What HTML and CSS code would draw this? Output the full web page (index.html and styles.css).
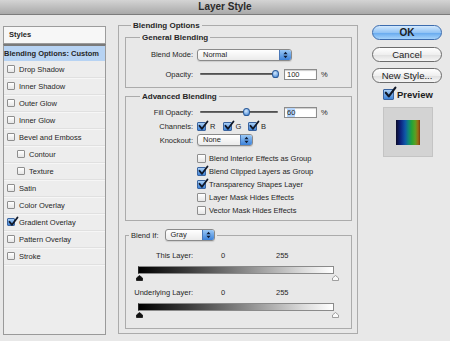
FILE: index.html
```html
<!DOCTYPE html>
<html>
<head>
<meta charset="utf-8">
<title>Layer Style</title>
<link rel="stylesheet" href="styles.css">
</head>
<body>
<div class="titlebar">Layer Style</div>
<div class="main">
  <div class="left">
    <div class="styles-head">Styles</div>
    <div class="styles-list">
      <div class="item active">Blending Options: Custom</div>
      <div class="item"><span class="cb"></span>Drop Shadow</div>
      <div class="item"><span class="cb"></span>Inner Shadow</div>
      <div class="item"><span class="cb"></span>Outer Glow</div>
      <div class="item"><span class="cb"></span>Inner Glow</div>
      <div class="item"><span class="cb"></span>Bevel and Emboss</div>
      <div class="item sub"><span class="cb"></span>Contour</div>
      <div class="item sub"><span class="cb"></span>Texture</div>
      <div class="item"><span class="cb"></span>Satin</div>
      <div class="item"><span class="cb"></span>Color Overlay</div>
      <div class="item"><span class="cb on"><svg class="chk" viewBox="0 0 10 10"><path d="M1.5 4.8 L4 7.8 L9.5 0.5"/></svg></span>Gradient Overlay</div>
      <div class="item"><span class="cb"></span>Pattern Overlay</div>
      <div class="item"><span class="cb"></span>Stroke</div>
    </div>
  </div>

  <div class="center">
    <div class="group outer">
      <div class="gtitle t-outer"><span>Blending Options</span></div>

      <div class="group general">
        <div class="gtitle t-inner"><span>General Blending</span></div>
        <div class="row r-mode">
          <span class="lab">Blend Mode:</span>
          <div class="select w-mode"><span class="sval">Normal</span><i class="arr"><svg viewBox="0 0 6 9"><path d="M3 0.5 L5.5 3.5 L0.5 3.5 Z M3 8.5 L5.5 5.5 L0.5 5.5 Z"/></svg></i></div>
        </div>
        <div class="row r-opac">
          <span class="lab">Opacity:</span>
          <div class="slider"><div class="track"></div><span class="thumb" style="left:98%"></span></div>
          <div class="num">100</div><span class="pct">%</span>
        </div>
      </div>

      <div class="group advanced">
        <div class="gtitle t-inner"><span>Advanced Blending</span></div>
        <div class="row r-fill">
          <span class="lab">Fill Opacity:</span>
          <div class="slider"><div class="track"></div><span class="thumb" style="left:60%"></span></div>
          <div class="num"><span class="sel">60</span></div><span class="pct">%</span>
        </div>
        <div class="row">
          <span class="lab">Channels:</span>
          <span class="chan"><span class="cb big on"><svg class="chk" viewBox="0 0 10 10"><path d="M1.5 4.8 L4 7.8 L9.5 0.5"/></svg></span><span class="cl">R</span></span>
          <span class="chan"><span class="cb big on"><svg class="chk" viewBox="0 0 10 10"><path d="M1.5 4.8 L4 7.8 L9.5 0.5"/></svg></span><span class="cl">G</span></span>
          <span class="chan"><span class="cb big on"><svg class="chk" viewBox="0 0 10 10"><path d="M1.5 4.8 L4 7.8 L9.5 0.5"/></svg></span><span class="cl">B</span></span>
        </div>
        <div class="row">
          <span class="lab">Knockout:</span>
          <div class="select w-knock"><span class="sval">None</span><i class="arr"><svg viewBox="0 0 6 9"><path d="M3 0.5 L5.5 3.5 L0.5 3.5 Z M3 8.5 L5.5 5.5 L0.5 5.5 Z"/></svg></i></div>
        </div>
        <div class="checks">
          <div class="crow"><span class="cb big"></span>Blend Interior Effects as Group</div>
          <div class="crow"><span class="cb big on"><svg class="chk" viewBox="0 0 10 10"><path d="M1.5 4.8 L4 7.8 L9.5 0.5"/></svg></span>Blend Clipped Layers as Group</div>
          <div class="crow"><span class="cb big on"><svg class="chk" viewBox="0 0 10 10"><path d="M1.5 4.8 L4 7.8 L9.5 0.5"/></svg></span>Transparency Shapes Layer</div>
          <div class="crow"><span class="cb big"></span>Layer Mask Hides Effects</div>
          <div class="crow"><span class="cb big"></span>Vector Mask Hides Effects</div>
        </div>
      </div>

      <div class="group blendif">
        <div class="gtitle t-blend"><span class="bt">Blend If:<div class="select w-gray"><span class="sval">Gray</span><i class="arr"><svg viewBox="0 0 6 9"><path d="M3 0.5 L5.5 3.5 L0.5 3.5 Z M3 8.5 L5.5 5.5 L0.5 5.5 Z"/></svg></i></div></span></div>
        <div class="row r-layer">
          <span class="lab">This Layer:</span><span class="v0">0</span><span>255</span>
        </div>
        <div class="gbar"></div>
        <div class="arrows">
          <svg class="ar" viewBox="0 0 7 6"><path class="dark" d="M3.5 0.5 L6.5 3 L6.5 5.5 L0.5 5.5 L0.5 3 Z"/></svg>
          <svg class="ar" viewBox="0 0 7 6"><path class="light" d="M3.5 0.5 L6.5 3 L6.5 5.5 L0.5 5.5 L0.5 3 Z"/></svg>
        </div>
        <div class="row r-under">
          <span class="lab">Underlying Layer:</span><span class="v0">0</span><span>255</span>
        </div>
        <div class="gbar"></div>
        <div class="arrows">
          <svg class="ar" viewBox="0 0 7 6"><path class="dark" d="M3.5 0.5 L6.5 3 L6.5 5.5 L0.5 5.5 L0.5 3 Z"/></svg>
          <svg class="ar" viewBox="0 0 7 6"><path class="light" d="M3.5 0.5 L6.5 3 L6.5 5.5 L0.5 5.5 L0.5 3 Z"/></svg>
        </div>
      </div>
    </div>
  </div>

  <div class="right">
    <div class="btn ok">OK</div>
    <div class="btn b-cancel">Cancel</div>
    <div class="btn b-new">New Style...</div>
    <div class="preview"><span class="cb pv on"><svg class="chk" viewBox="0 0 10 10"><path d="M1.5 4.8 L4 7.8 L9.5 0.5"/></svg></span>Preview</div>
    <div class="swatch"><div class="swatch-in"></div></div>
  </div>
</div>
</body>
</html>
```

FILE: styles.css
```css
* { box-sizing: border-box; }
html, body { margin: 0; padding: 0; }
body {
  width: 450px;
  height: 341px;
  overflow: hidden;
  background: #e8e8e8;
  font-family: "Liberation Sans", Arial, sans-serif;
  font-size: 7.5px;
  color: #262626;
}

.titlebar {
  height: 15px;
  line-height: 14px;
  border-bottom: 1px solid #7c7c7c;
  background: linear-gradient(#d4d4d4, #a9a9a9);
  text-align: center;
  font-weight: bold;
  font-size: 10px;
  color: #2a2a2a;
}

.main {
  display: flex;
  align-items: flex-start;
  padding: 10px 0 0 3px;
}

/* left styles list */
.left { width: 103px; margin-top: 1px; }
.styles-head {
  height: 18px;
  line-height: 16px;
  border: 1px solid #9c9c9c;
  background: #f7f7f7;
  padding-left: 5px;
  font-weight: bold;
}
.styles-list {
  height: 291px;
  border: 1px solid #9a9a9a;
  border-top: 2px solid #7a7a7a;
  background: #ededed;
}
.item {
  display: flex;
  align-items: center;
  height: 17px;
  padding-left: 3px;
  border-bottom: 1px solid #e0e0e0;
  box-shadow: 0 1px 0 #f6f6f6;
  white-space: nowrap;
}
.item.active {
  height: 15px;
  padding-left: 0;
  background: #b7d3f3;
  font-weight: bold;
  border-bottom: 0;
  box-shadow: none;
}
.item.sub { padding-left: 13px; }
.item .cb { margin-right: 4px; }

.cb {
  position: relative;
  display: inline-block;
  flex: none;
  width: 8px;
  height: 8px;
  border: 1px solid #8e8e8e;
  border-radius: 1px;
  background: linear-gradient(#ffffff, #e6e6e6);
}
.cb.big { width: 9px; height: 9px; }
.cb.on {
  background: linear-gradient(#a9cff6, #3f84d9);
  border-color: #3a64a0;
}
.chk {
  position: absolute;
  left: 0;
  top: -2px;
  width: 10px;
  height: 10px;
  overflow: visible;
}
.chk path {
  fill: none;
  stroke: #101828;
  stroke-width: 1.8;
  stroke-linecap: round;
  stroke-linejoin: round;
}

/* center */
.center { width: 240px; margin-left: 12px; }
.group { border: 1px solid #ababab; }
.outer { padding: 0 5px 4px 6px; }
.gtitle {
  height: 11px;
  line-height: 11px;
  margin-top: -6px;
  white-space: nowrap;
}
.gtitle > span {
  display: inline-block;
  background: #e8e8e8;
  padding: 0 2px;
  font-weight: bold;
  font-size: 8px;
}
.t-outer > span { margin-left: 6px; }
.t-inner > span { margin-left: 14px; }

.general { margin-top: 6px; padding-bottom: 6px; }
.advanced { margin-top: 8px; padding-bottom: 3px; }
.blendif { margin-top: 14px; padding-bottom: 10px; }

.row {
  display: flex;
  align-items: center;
  height: 14px;
  white-space: nowrap;
}
.lab {
  width: 67px;
  margin-right: 4px;
  text-align: right;
  flex: none;
}
.r-mode { height: 13px; margin-top: 5px; }
.r-opac { margin-top: 6px; }
.r-fill { margin-top: 3px; }

.select {
  display: flex;
  align-items: stretch;
  height: 12px;
  border: 1px solid #8a8a8a;
  border-radius: 3px;
  background: linear-gradient(#ffffff, #ebebeb);
  box-shadow: 0 1px 1px rgba(0, 0, 0, 0.12);
  overflow: hidden;
  font-weight: normal;
}
.sval { flex: 1; padding-left: 5px; line-height: 10px; }
.arr {
  width: 12px;
  display: flex;
  align-items: center;
  justify-content: center;
  background: linear-gradient(#9ac8f6, #3c82da);
  border-left: 1px solid #4a78b8;
}
.arr svg { width: 5px; height: 8px; }
.arr path { fill: #0e1c36; }
.w-mode { width: 95px; }
.w-knock { width: 56px; }
.w-gray { width: 50px; margin-left: 6px; }

.slider {
  position: relative;
  width: 78px;
  height: 10px;
  margin-left: 3px;
  display: flex;
  align-items: center;
}
.track {
  width: 100%;
  height: 2px;
  border-radius: 1px;
  background: linear-gradient(#444, #777);
}
.thumb {
  position: absolute;
  top: 1px;
  width: 7px;
  height: 8px;
  margin-left: -4px;
  border-radius: 50% 50% 45% 45%;
  border: 1px solid #2d5c9a;
  background: radial-gradient(circle at 40% 35%, #d4e8fc, #3d84d8);
}
.num {
  width: 33px;
  height: 11px;
  margin-left: 6px;
  border: 1px solid #8c8c8c;
  background: #fff;
  box-shadow: inset 0 1px 1px rgba(0, 0, 0, 0.2);
  line-height: 9px;
  padding-left: 2px;
}
.sel { background: #b4d4fb; }
.pct { margin-left: 4px; }

.chan { display: flex; align-items: center; width: 25.5px; }
.cl { margin-left: 4px; }

.checks { padding-left: 71px; margin-top: 5px; }
.crow {
  display: flex;
  align-items: center;
  height: 13px;
  white-space: nowrap;
}
.crow .cb { margin-right: 3px; }

.t-blend { height: 12px; margin-top: -7px; }
.t-blend > .bt {
  display: inline-flex;
  align-items: center;
  margin-left: 3px;
  padding: 0 2px;
  font-weight: normal;
  font-size: 7.5px;
}
.r-layer { height: 12px; margin-top: 8px; }
.r-under { height: 12px; margin-top: 5px; }
.v0 { width: 55px; margin-left: 24px; }

.gbar {
  width: 196px;
  height: 8px;
  margin: 5px 0 0 12px;
  border: 1px solid #8a8a8a;
  border-left-color: #222;
  background: linear-gradient(to right, #000 0%, #3a3a3a 25%, #8a8a8a 55%, #dcdcdc 85%, #fff 100%);
}
.arrows {
  display: flex;
  justify-content: space-between;
  width: 203px;
  height: 7px;
  margin-left: 10px;
}
.ar { width: 7px; height: 6px; margin-top: 1px; }
.ar .dark { fill: #111; stroke: #111; stroke-width: 0.8; }
.ar .light { fill: #fafafa; stroke: #8a8a8a; stroke-width: 0.8; }

/* right */
.right { width: 70px; margin-left: 14px; }
.btn {
  height: 15px;
  border-radius: 8px;
  border: 1px solid #6c6c6c;
  background: linear-gradient(#ffffff 0%, #efefef 50%, #dedede 51%, #f6f6f6 100%);
  text-align: center;
  line-height: 13px;
  font-size: 9.5px;
  color: #1c1c1c;
}
.btn.ok {
  border-color: #3c6cae;
  background: linear-gradient(#d2e8fd 0%, #93c4f5 50%, #63a7ee 51%, #a6d3fb 100%);
  font-weight: bold;
  font-size: 10px;
}
.b-cancel { margin-top: 7px; }
.b-new { margin-top: 6px; }
.preview {
  display: flex;
  align-items: center;
  height: 12px;
  margin-top: 5px;
  padding-left: 11px;
  font-size: 9.5px;
  font-weight: bold;
  color: #1c1c1c;
}
.cb.pv { width: 11px; height: 11px; margin-right: 3px; }
.cb.pv .chk { width: 12px; height: 12px; top: -3px; }
.swatch {
  width: 50px;
  height: 50px;
  margin: 7px 0 0 11px;
  border: 1px solid #c4c4c4;
  background: #d3d3d3;
  display: flex;
  align-items: center;
  justify-content: center;
}
.swatch-in {
  width: 24px;
  height: 25px;
  background: linear-gradient(to right, #0c0c2a 0%, #0d2480 20%, #0f56a8 38%, #10877a 52%, #24a436 66%, #5aa024 80%, #9a6a14 92%, #7a3a10 100%);
}
```
